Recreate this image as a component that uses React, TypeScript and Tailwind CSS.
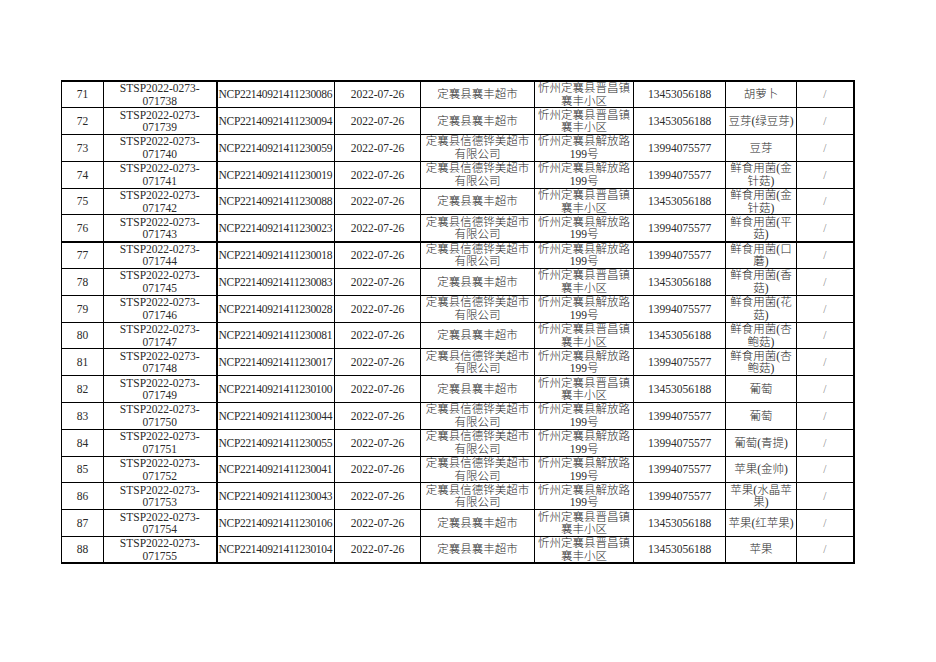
const XF = ['定襄县襄丰超市']
const XD = ['定襄县信德铧美超市', '有限公司']
const AJ = ['忻州定襄县晋昌镇', '襄丰小区']
const AD = ['忻州定襄县解放路', '199号']
const PJ = '13453056188'
const PD = '13994075577'

type Row = {
  no: number
  code: string
  ncp: string
  shop: string[]
  addr: string[]
  phone: string
  item: string[]
}

const RAW: [number, string, 'j' | 'd', string[]][] = [
  [71, '30086', 'j', ['胡萝卜']],
  [72, '30094', 'j', ['豆芽(绿豆芽)']],
  [73, '30059', 'd', ['豆芽']],
  [74, '30019', 'd', ['鲜食用菌(金', '针菇)']],
  [75, '30088', 'j', ['鲜食用菌(金', '针菇)']],
  [76, '30023', 'd', ['鲜食用菌(平', '菇)']],
  [77, '30018', 'd', ['鲜食用菌(口', '蘑)']],
  [78, '30083', 'j', ['鲜食用菌(香', '菇)']],
  [79, '30028', 'd', ['鲜食用菌(花', '菇)']],
  [80, '30081', 'j', ['鲜食用菌(杏', '鲍菇)']],
  [81, '30017', 'd', ['鲜食用菌(杏', '鲍菇)']],
  [82, '30100', 'j', ['葡萄']],
  [83, '30044', 'd', ['葡萄']],
  [84, '30055', 'd', ['葡萄(青提)']],
  [85, '30041', 'd', ['苹果(金帅)']],
  [86, '30043', 'd', ['苹果(水晶苹', '果)']],
  [87, '30106', 'j', ['苹果(红苹果)']],
  [88, '30104', 'j', ['苹果']],
]

const ROWS: Row[] = RAW.map(([no, tail, kind, item]) => ({
  no,
  code: String(71738 + (no - 71)).padStart(6, '0'),
  ncp: 'NCP221409214112' + tail,
  shop: kind === 'j' ? XF : XD,
  addr: kind === 'j' ? AJ : AD,
  phone: kind === 'j' ? PJ : PD,
  item,
}))

const WIDTHS = ['w-[42px]', 'w-[113px]', 'w-[118px]', 'w-[86px]', 'w-[114px]', 'w-[99px]', 'w-[92px]', 'w-[71px]', 'w-[57px]']

function Lines({ lines }: { lines: string[] }) {
  return (
    <>
      {lines.map((l, i) => (
        <div key={i} className="whitespace-nowrap">
          {l}
        </div>
      ))}
    </>
  )
}

export default function App() {
  return (
    <div className="h-[662px] w-[936px] bg-white pl-[61px] pt-[80px] font-['Liberation_Serif','Noto_Sans_CJK_SC',serif] text-[11.5px] font-light leading-[12.5px] text-[#2a2a2a]">
      <table className="w-[793px] table-fixed border-collapse border-2 border-l border-black">
        <colgroup>
          {WIDTHS.map((w, i) => (
            <col key={i} className={w} />
          ))}
        </colgroup>
        <tbody>
          {ROWS.map((r) => {
            const thick = r.no === 76 ? 'border-b-2' : ''
            const cell = `border border-black p-0 text-center align-middle overflow-hidden ${thick}`
            return (
              <tr key={r.no} className="h-[26.8px]">
                <td className={cell}>{r.no}</td>
                <td className={`${cell} border-r-2`}>
                  <Lines lines={['STSP2022-0273-', r.code]} />
                </td>
                <td className={`${cell} whitespace-nowrap pl-px text-left tracking-[-0.3px]`}>{r.ncp}</td>
                <td className={cell}>2022-07-26</td>
                <td className={cell}>
                  <Lines lines={r.shop} />
                </td>
                <td className={cell}>
                  <Lines lines={r.addr} />
                </td>
                <td className={cell}>{r.phone}</td>
                <td className={cell}>
                  <Lines lines={r.item} />
                </td>
                <td className={`${cell} text-[#888]`}>/</td>
              </tr>
            )
          })}
        </tbody>
      </table>
    </div>
  )
}
